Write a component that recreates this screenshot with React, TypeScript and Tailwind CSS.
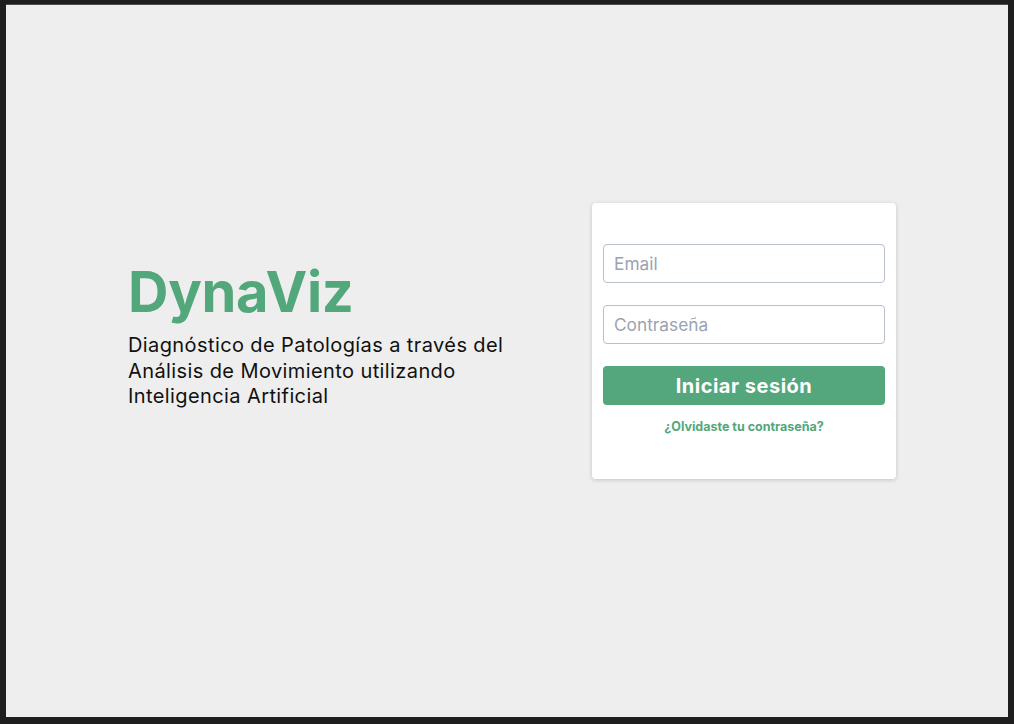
export default function App() {
  return (
    <div className="h-screen w-full bg-[#1e1e1e] pt-[4px] pl-[6px] pr-[6px] pb-[7px] font-['Inter',sans-serif]">
      <div className="flex h-full items-start border-t border-[#4d4d4d] bg-[#eeeeee] pl-[122px]">
        <div className="mt-[253px] w-[464px]">
          <h1 className="text-[56px] font-bold leading-[68px] tracking-[-0.3px] text-[#52a77b]">
            DynaViz
          </h1>
          <p className="mt-[7px] w-[420px] text-[20px] leading-[25.5px] tracking-[0.4px] text-[#111111]">
            Diagnóstico de Patologías a través del Análisis de Movimiento
            utilizando Inteligencia Artificial
          </p>
        </div>

        <div className="mt-[198px] h-[276px] w-[304px] rounded-[4px] bg-white px-[11px] pt-[41px] shadow-[0_1px_4px_rgba(0,0,0,0.18)]">
          <input
            type="email"
            placeholder="Email"
            className="block h-[39px] w-full rounded-[4px] border border-[#b9c0cc] px-[10px] text-[17.3px] text-[#333] placeholder:text-[#9aa3b2] outline-none"
          />
          <input
            type="password"
            placeholder="Contraseña"
            className="mt-[22px] block h-[39px] w-full rounded-[4px] border border-[#b9c0cc] px-[10px] text-[17.3px] text-[#333] placeholder:text-[#9aa3b2] outline-none"
          />
          <button className="mt-[22px] block h-[39px] w-full rounded-[4px] bg-[#54a67c] text-[20px] font-bold tracking-[0.5px] text-white">
            Iniciar sesión
          </button>
          <p className="mt-[13px] text-center text-[12.5px] font-bold text-[#52a77b]">
            ¿Olvidaste tu contraseña?
          </p>
        </div>
      </div>
    </div>
  );
}
